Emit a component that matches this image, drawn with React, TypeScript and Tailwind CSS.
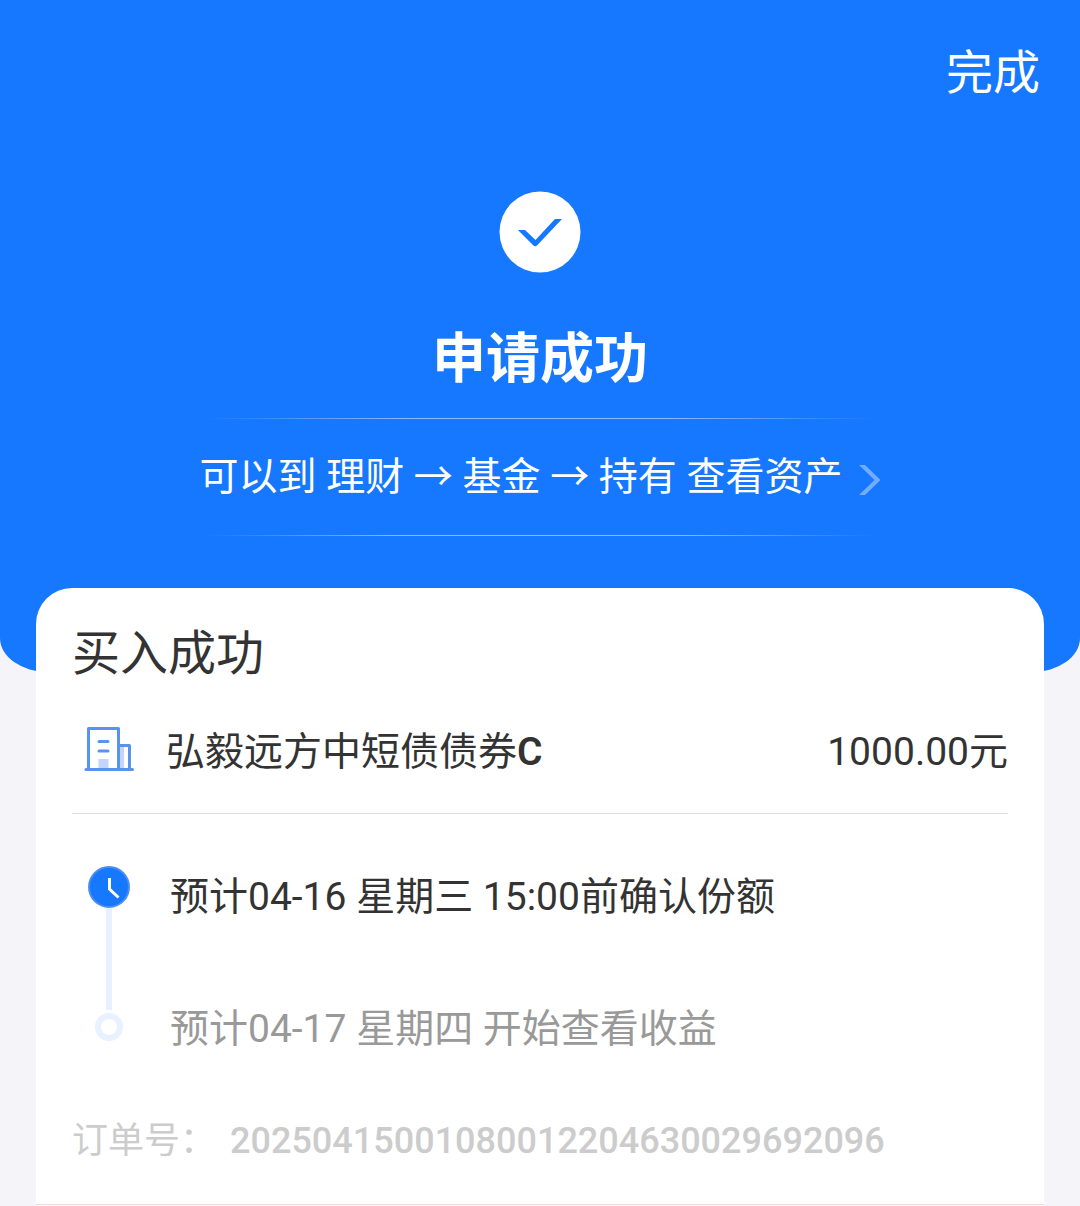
import React from "react";

const assetPath = "可以到 理财 → 基金 → 持有 查看资产";

const order = {
  fund: "弘毅远方中短债债券",
  shareClass: "C",
  amount: "1000.00元",
  number: "20250415001080012204630029692096",
};

const CheckBadge: React.FC = () => (
  <svg viewBox="0 0 82 82" className="size-[82px]" aria-hidden="true">
    <circle cx="41" cy="41" r="40.5" fill="#fff" />
    <path
      d="M19 39H26L36.500 49L55 29Q56 28 57 28H63L38 54.500Q36.200 56 34.400 54.500Z"
      fill="#1677ff"
    />
  </svg>
);

const BuildingIcon: React.FC = () => (
  <svg viewBox="0 0 50 46" className="h-[46px] w-[50px]" aria-hidden="true">
    <path d="M14.500 33h10v10h-10zM35 20h5v23h-5z" fill="#c3d5fc" />
    <g fill="none" stroke="#5a93ec" strokeWidth="3" strokeLinejoin="round" strokeLinecap="round">
      <path d="M4.500 43V2.500H34.500V43M34.500 19.500H45.500V43" />
      <path d="M2 43.500H48.500" />
      <path d="M15 15.500H24M15 25H24" />
    </g>
  </svg>
);

const ClockDot: React.FC = () => (
  <svg viewBox="0 0 42 42" className="size-[42px]" aria-hidden="true">
    <circle cx="21" cy="21" r="20" fill="#1677ff" stroke="#4a8ff0" strokeWidth="2" />
    <path d="M21.500 12V23L30.500 31.500" fill="none" stroke="#fff" strokeWidth="3" />
  </svg>
);

const Divider: React.FC = () => (
  <div className="h-px w-full bg-[linear-gradient(90deg,transparent,rgba(255,255,255,0.5)_30%,rgba(255,255,255,0.5)_70%,transparent)]" />
);

const App: React.FC = () => {
  return (
    <div className="min-h-screen overflow-hidden bg-[#f4f4f9] font-['Roboto','Noto_Sans_CJK_SC',sans-serif] text-[#333]">
      {/* Result banner */}
      <header className="flex flex-col items-center rounded-b-[48px_34px] bg-[#1677ff] pb-[136px] text-white">
        <div className="flex w-full justify-end px-10 pt-[39px]">
          <button type="button" className="text-[47px] leading-[68px]">
            完成
          </button>
        </div>
        <div className="mt-[84px]">
          <CheckBadge />
        </div>
        <h1 className="mt-[47px] text-[54px] leading-[80px] font-bold">申请成功</h1>
        <div className="mt-[18px] w-[672px] max-w-full">
          <Divider />
          <a href="#assets" className="flex h-[116px] items-center justify-center gap-4 text-[39px] whitespace-nowrap">
            {assetPath}
            <svg viewBox="0 0 22 32" className="mt-1.5 h-8 w-[22px] shrink-0" aria-hidden="true">
              <path d="M0 1H6L21.500 16L6 31H0L15.500 16Z" fill="#73adff" />
            </svg>
          </a>
          <Divider />
        </div>
      </header>

      {/* Order card */}
      <main className="mx-9 -mt-[84px] rounded-t-[36px] bg-white px-9 pt-[31px]">
        <h2 className="text-[48px] leading-[70px]">买入成功</h2>
        <div className="mt-[34px] flex items-center border-b border-[#ddd] pb-8 text-[39px] leading-[58px]">
          <div className="mr-8 ml-3 pb-1.5">
            <BuildingIcon />
          </div>
          <span>
            {order.fund}
            <b className="font-semibold">{order.shareClass}</b>
          </span>
          <span className="ml-auto">{order.amount}</span>
        </div>

        <ol className="mt-[52px] text-[39px] leading-[58px]">
          <li className="flex h-[132px] gap-10">
            <div className="ml-4 flex w-[42px] flex-col items-center">
              <ClockDot />
              <div className="w-[6px] grow bg-[#e7f1ff]" />
            </div>
            <span className="pt-0.5">预计04-16 星期三 15:00前确认份额</span>
          </li>
          <li className="flex gap-10 text-[#999]">
            <div className="ml-4 flex w-[42px] flex-col items-center">
              <div className="h-3 w-[6px] bg-[#e7f1ff]" />
              <div className="mt-[3px] size-[28px] rounded-full border-[6px] border-[#e7f1ff]" />
            </div>
            <span className="pt-0.5">预计04-17 星期四 开始查看收益</span>
          </li>
        </ol>

        <p className="mt-14 flex gap-3.5 pb-9 text-[36px] leading-[54px] text-[#ccc]">
          <span>订单号：</span>
          <span className="font-medium">{order.number}</span>
        </p>
      </main>
      <section className="mx-9 h-8 border-t border-[#f3d9dc] bg-[#fdf8f8]" />
    </div>
  );
};

export default App;
